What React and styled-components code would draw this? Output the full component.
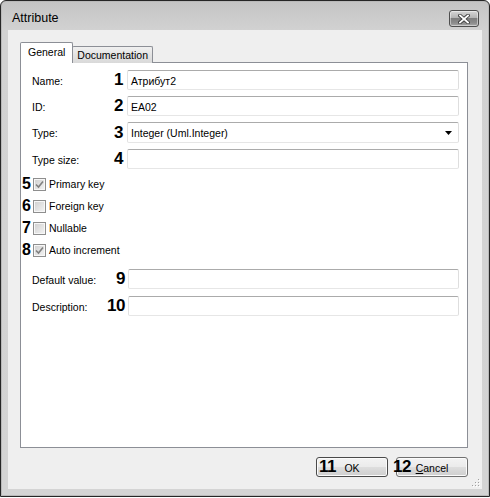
import React from "react";
import styled, { createGlobalStyle } from "styled-components";

const GlobalStyle = createGlobalStyle`
  html, body {
    margin: 0;
    padding: 0;
    background: #fff;
  }
  body {
    font-family: "Liberation Sans", Arial, sans-serif;
  }
`;

const Window = styled.div`
  width: 490px;
  height: 497px;
  box-sizing: border-box;
  border: 1px solid #262626;
  border-radius: 6px 6px 0 0;
  background: linear-gradient(#c4c4c4, #d2d2d2 30px, #d4d4d4);
  box-shadow: inset 0 0 0 1px #b9b9b9;
  display: flex;
  flex-direction: column;
  padding: 0 7px 7px 7px;
`;

const TitleBar = styled.div`
  height: 29px;
  box-sizing: border-box;
  padding: 4px 3px 0 4px;
  display: flex;
  align-items: center;
  justify-content: space-between;
`;

const TitleText = styled.span`
  font-size: 12.5px;
  color: #000;
`;

const CloseButton = styled.div`
  align-self: flex-start;
  margin-top: 5px;
  width: 30px;
  height: 17px;
  box-sizing: border-box;
  border: 1px solid #4e4e4e;
  border-radius: 3px;
  background: linear-gradient(#d6d6d6 0%, #b4b4b4 45%, #7e7e7e 50%, #8c8c8c 80%, #a8a8a8 100%);
  box-shadow: inset 0 0 0 1px rgba(255, 255, 255, 0.45);
  display: flex;
  align-items: center;
  justify-content: center;
`;

const Client = styled.div`
  flex: 1;
  position: relative;
  background: #efefef;
  padding: 12px 14px 0 12px;
  display: flex;
  flex-direction: column;
`;

const Tabs = styled.div`
  display: flex;
  align-items: flex-end;
  height: 21px;
  margin-bottom: -1px;
  position: relative;
  z-index: 1;
`;

const Tab = styled.div`
  box-sizing: border-box;
  border: 1px solid #8c8f96;
  border-bottom: none;
  font-size: 10.5px;
  color: #000;
  display: flex;
  align-items: center;
  height: ${(p) => (p.$active ? "21px" : "17px")};
  padding: ${(p) => (p.$active ? "0 7px 2px 7px" : "0 4px")};
  margin-left: ${(p) => (p.$active ? "0" : "-1px")};
  border-radius: 2px 2px 0 0;
  background: ${(p) =>
    p.$active ? "#fff" : "linear-gradient(#f0f0f0, #e3e3e3 50%, #d9d9d9)"};
  position: relative;
  z-index: ${(p) => (p.$active ? 2 : 1)};
`;

const Panel = styled.div`
  height: 386px;
  box-sizing: border-box;
  border: 1px solid #8c8f96;
  background: #fff;
  padding: 7px 8px 0 0;
  display: flex;
  flex-direction: column;
`;

const FieldGroup = styled.div`
  display: flex;
  flex-direction: column;
  gap: ${(p) => p.$gap}px;
`;

const FieldRow = styled.div`
  display: flex;
  align-items: center;
  height: ${(p) => (p.$tall ? "21px" : "20px")};
  padding-left: 11px;
`;

const Label = styled.span`
  flex: 1;
  font-size: 10.5px;
  color: #000;
  padding-top: 1px;
`;

const Num = styled.span`
  font-weight: bold;
  font-size: ${(p) => p.$size || 17}px;
  line-height: 20px;
  letter-spacing: -0.5px;
  color: #000;
  margin-right: ${(p) => (p.$gap === undefined ? 4 : p.$gap)}px;
  text-align: ${(p) => (p.$w ? "left" : "right")};
  width: ${(p) => (p.$w ? p.$w + "px" : "auto")};
`;

const TextBox = styled.div`
  width: ${(p) => p.$w || 332}px;
  height: 100%;
  box-sizing: border-box;
  border: 1px solid;
  border-color: #ababab #dedede #e6e6e6 #e2e2e2;
  border-radius: 2px;
  background: #fff;
  font-size: 10.5px;
  color: #000;
  padding: 1px 3px 0 3px;
  display: flex;
  align-items: center;
  justify-content: space-between;
`;

const CheckGroup = styled.div`
  display: flex;
  flex-direction: column;
  margin: 4px 0 8px 0;
`;

const CheckRow = styled.div`
  display: flex;
  align-items: center;
  height: 22px;
  padding-left: 1px;
`;

const Box = styled.span`
  width: 13px;
  height: 13px;
  box-sizing: border-box;
  border: 1px solid #8e8e8e;
  background: linear-gradient(135deg, #cfcfcf, #f4f4f4);
  box-shadow: inset 0 0 0 1px #f7f7f7;
  margin-right: 3px;
  display: flex;
  align-items: center;
  justify-content: center;
`;

const CheckText = styled.span`
  font-size: 10.5px;
  color: #000;
`;

const ButtonRow = styled.div`
  display: flex;
  justify-content: flex-end;
  gap: 8px;
  margin-top: 9px;
`;

const ButtonWrap = styled.div`
  position: relative;
`;

const Button = styled.div`
  width: 72px;
  height: 20px;
  box-sizing: border-box;
  border: 1px solid ${(p) => (p.$default ? "#4a4a4a" : "#707070")};
  border-radius: 3px;
  background: linear-gradient(#f3f3f3 0%, #ebebeb 48%, #dddddd 52%, #cfcfcf 100%);
  box-shadow: inset 0 0 0 1px #fbfbfb;
  font-size: 10.5px;
  color: #000;
  display: flex;
  align-items: center;
  justify-content: center;
  padding-top: 1px;
`;

const Badge = styled.span`
  position: absolute;
  left: ${(p) => p.$left}px;
  top: 0;
  font-weight: bold;
  font-size: 17px;
  line-height: 20px;
  letter-spacing: -0.5px;
  color: #000;
`;

const Grip = styled.svg`
  position: absolute;
  right: 2px;
  bottom: 2px;
`;

const CloseIcon = () => (
  <svg width="12" height="10" viewBox="0 0 12 10">
    <path d="M2 1.5 L10 8.5 M10 1.5 L2 8.5" stroke="#3c3c3c" strokeWidth="3.6" strokeLinecap="square" />
    <path d="M2 1.5 L10 8.5 M10 1.5 L2 8.5" stroke="#fff" strokeWidth="1.8" strokeLinecap="square" />
  </svg>
);

const Arrow = () => (
  <svg width="7" height="4" viewBox="0 0 7 4" style={{ marginRight: 3 }}>
    <polygon points="0,0 7,0 3.5,4" fill="#000" />
  </svg>
);

const Tick = () => (
  <svg width="9" height="9" viewBox="0 0 9 9">
    <path d="M1 4.5 L3.5 7 L8 1.5" fill="none" stroke="#808080" strokeWidth="1.6" />
  </svg>
);

const fieldsTop = [
  { label: "Name:", n: "1", value: "Атрибут2" },
  { label: "ID:", n: "2", value: "EA02" },
  { label: "Type:", n: "3", value: "Integer (Uml.Integer)", combo: true },
  { label: "Type size:", n: "4", value: "" },
];

const checks = [
  { n: "5", label: "Primary key", checked: true },
  { n: "6", label: "Foreign key", checked: false },
  { n: "7", label: "Nullable", checked: false },
  { n: "8", label: "Auto increment", checked: true },
];

const fieldsBottom = [
  { label: "Default value:", n: "9" },
  { label: "Description:", n: "10" },
];

const gripDots = [
  [6, 0],
  [6, 3],
  [3, 3],
  [6, 6],
  [3, 6],
  [0, 6],
];

export default function App() {
  return (
    <>
      <GlobalStyle />
      <Window>
        <TitleBar>
          <TitleText>Attribute</TitleText>
          <CloseButton>
            <CloseIcon />
          </CloseButton>
        </TitleBar>
        <Client>
          <Tabs>
            <Tab $active>General</Tab>
            <Tab>Documentation</Tab>
          </Tabs>
          <Panel>
            <FieldGroup $gap={6}>
              {fieldsTop.map((f) => (
                <FieldRow key={f.n} $tall={f.combo}>
                  <Label>{f.label}</Label>
                  <Num>{f.n}</Num>
                  <TextBox>
                    <span>{f.value}</span>
                    {f.combo && <Arrow />}
                  </TextBox>
                </FieldRow>
              ))}
            </FieldGroup>
            <CheckGroup>
              {checks.map((c) => (
                <CheckRow key={c.n}>
                  <Num $size={16} $w={11} $gap={0}>
                    {c.n}
                  </Num>
                  <Box>{c.checked && <Tick />}</Box>
                  <CheckText>{c.label}</CheckText>
                </CheckRow>
              ))}
            </CheckGroup>
            <FieldGroup $gap={7}>
              {fieldsBottom.map((f) => (
                <FieldRow key={f.n}>
                  <Label>{f.label}</Label>
                  <Num $gap={3}>{f.n}</Num>
                  <TextBox $w={331} />
                </FieldRow>
              ))}
            </FieldGroup>
          </Panel>
          <ButtonRow>
            <ButtonWrap>
              <Button $default>OK</Button>
              <Badge $left={3}>11</Badge>
            </ButtonWrap>
            <ButtonWrap>
              <Button>
                <span>
                  <u>C</u>ancel
                </span>
              </Button>
              <Badge $left={-3}>12</Badge>
            </ButtonWrap>
          </ButtonRow>
          <Grip width="8" height="8" viewBox="0 0 8 8">
            {gripDots.map(([x, y]) => (
              <g key={x + "-" + y}>
                <rect x={x + 1} y={y + 1} width="1" height="1" fill="#fff" />
                <rect x={x} y={y} width="1" height="1" fill="#a0a0a0" />
              </g>
            ))}
          </Grip>
        </Client>
      </Window>
    </>
  );
}
